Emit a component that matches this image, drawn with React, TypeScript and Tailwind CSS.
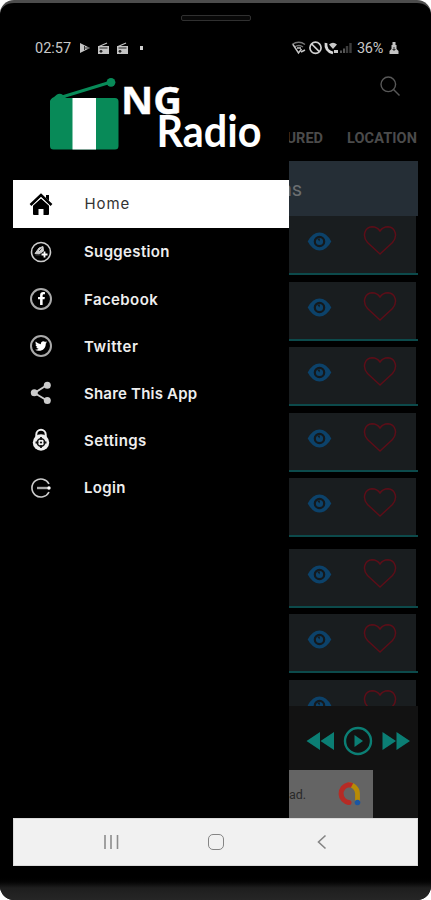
import React from 'react';
import { FaFacebookF, FaTwitter } from 'react-icons/fa';

const stations = [0, 1, 2, 3, 4, 5, 6, 7];

function RadioGlyph() {
  return (
    <svg width="13" height="13" viewBox="0 0 13 13" fill="none">
      <path d="M2 4.500 10 1" stroke="#c4c4c4" strokeWidth="1.200" />
      <path d="M1 4h11v8H1z" fill="#c4c4c4" />
      <path d="M2.500 6h8" stroke="#222" strokeWidth="1" />
      <circle cx="4" cy="9.300" r="1.400" fill="#222" />
    </svg>
  );
}

function StatusBar() {
  return (
    <div className="flex h-[24px] items-center pl-[22px] pr-[19px] text-[#c8c8c8]">
      <span className="w-[37px] pt-[2px] font-['Roboto'] text-[14.5px] leading-none">02:57</span>
      <svg className="ml-[7px]" width="12" height="12" viewBox="0 0 12 12">
        <path d="M1 1 11 6 1 11z" fill="#c4c4c4" />
        <path d="M5.500 4v4M5.500 6H10" stroke="#333" strokeWidth="1" />
      </svg>
      <div className="ml-[6px] flex gap-[6px]">
        <RadioGlyph />
        <RadioGlyph />
      </div>
      <div className="ml-[11px] h-[4px] w-[3px] bg-[#d0d0d0]" />
      <svg className="ml-auto" width="62" height="14" viewBox="0 0 62 14" fill="none">
        <path d="M1 3.500Q8 -1 14 3.500M3.500 6Q8 3 12 6" stroke="#777" strokeWidth="1.300" />
        <path d="M2 3.500 7.500 12l3-4M6 7h4M10 11l4-2" stroke="#c4c4c4" strokeWidth="1.500" />
        <circle cx="24.500" cy="6.800" r="5.600" stroke="#d0d0d0" strokeWidth="1.700" />
        <path d="m20.700 3 7.600 7.600" stroke="#d0d0d0" strokeWidth="1.700" />
        <path d="M35 2Q34 10 42 12" stroke="#d8d8d8" strokeWidth="2.800" />
        <path d="M38 3.500Q42 0 46 3.500L42 8zM43 9h4v3h-4z" fill="#c8c8c8" />
        <path d="M50 12V9.500M53 12V7.500" stroke="#555" strokeWidth="2" />
        <path d="M56 12V5M59.500 12V2" stroke="#3c3c3c" strokeWidth="2.400" />
      </svg>
      <span className="ml-[4px] w-[28px] pt-[2px] font-['Roboto'] text-[14.5px] leading-none tracking-[-0.3px]">36%</span>
      <svg className="ml-[4px]" width="10" height="13" viewBox="0 0 10 13">
        <path d="M3.500 0h3v3h1v4l2 2v3h-9V9l2-2V3h1z" fill="#c4c4c4" />
        <path d="M5 5v4M3.500 7.500h3" stroke="#333" />
      </svg>
    </div>
  );
}

function Logo() {
  return (
    <svg width="276" height="119" viewBox="13 61 276 119">
      <path d="M62 97 111 82" stroke="#088a58" strokeWidth="3" />
      <circle cx="111" cy="82.300" r="4.400" fill="#088a58" />
      <path d="M54 97 57 94.500Q60 93 63 95L66 98H115Q118.500 98 118.500 101.500V146Q118.500 149.500 115 149.500H53.500Q50 149.500 50 146V101.500Q50 99 54 97z" fill="#088a58" />
      <path d="M72.500 98h23.500v51.500h-23.500z" fill="#fff" />
      <text x="121" y="114" fontFamily="Open Sans" fontWeight="700" fontSize="37.500" textLength="61" lengthAdjust="spacingAndGlyphs" fill="#fff" stroke="#fff" strokeWidth="0.400">NG</text>
      <text x="156.500" y="147" fontFamily="Lato" fontWeight="700" fontSize="43" textLength="105" lengthAdjust="spacingAndGlyphs" fill="#fff">Radio</text>
    </svg>
  );
}

function HomeIcon() {
  return (
    <svg width="24" height="24" viewBox="0 0 24 24" fill="none">
      <path d="M1.500 13 12 3l10.500 10" stroke="#000" strokeWidth="2.600" />
      <path d="M17 3h3v6l-3-3z" fill="#000" />
      <path d="M4 13.500 12 6.500l8 7V22q0 1-1 1h-4.500v-6h-5v6H5q-1 0-1-1z" fill="#000" />
      <path d="M3 14.200 12 5.700l9 8.500" stroke="#fff" strokeWidth="0.700" />
    </svg>
  );
}

function SuggestionIcon() {
  return (
    <svg width="22" height="22" viewBox="0 0 22 22" fill="none" stroke="#ccc">
      <circle cx="11" cy="11" r="9.500" strokeWidth="1.600" />
      <path d="M5 12.500 9 7l4-1.500L13.500 10 9 13z" fill="#ccc" />
      <path d="m9 10 2.500-2.500M5.500 14h5" stroke="#444" />
      <path d="M14.500 10.500v6M11.500 13.500h6" stroke="#fff" strokeWidth="1.800" />
    </svg>
  );
}

function FacebookIcon() {
  return (
    <div className="flex h-[22px] w-[22px] items-center justify-center rounded-full border-2 border-[#aaa]">
      <FaFacebookF size={13} color="#fff" />
    </div>
  );
}

function TwitterIcon() {
  return (
    <div className="flex h-[22px] w-[22px] items-center justify-center rounded-full border-2 border-[#aaa]">
      <FaTwitter size={12} color="#fff" />
    </div>
  );
}

function ShareIcon() {
  return (
    <svg width="22" height="24" viewBox="0 0 22 24" fill="#ccc">
      <path d="M17 4 4.500 12 17 19.500" fill="none" stroke="#ccc" strokeWidth="1.900" />
      <circle cx="17.300" cy="4.300" r="3.500" />
      <circle cx="4.300" cy="11.800" r="3.500" />
      <circle cx="17.300" cy="19.500" r="3.500" />
    </svg>
  );
}

function SettingsIcon() {
  return (
    <svg width="22" height="24" viewBox="0 0 22 24" fill="none">
      <path d="M6.300 10V6.500a4.700 4.700 0 0 1 9.400 0V10" stroke="#eee" strokeWidth="2" />
      <circle cx="11" cy="14.500" r="8.200" fill="#eee" />
      <circle cx="11" cy="14.500" r="3.700" stroke="#111" strokeWidth="1.500" />
      <path d="M11 9v3M11 17v3M5.500 14.500h3M13.500 14.500h3" stroke="#111" strokeWidth="1.800" />
      <circle cx="11" cy="14.500" r="1.100" fill="#111" />
    </svg>
  );
}

function LoginIcon() {
  return (
    <svg width="22" height="22" viewBox="0 0 22 22" fill="none">
      <path d="M19 7A9 9 0 1 0 19 15" stroke="#ccc" strokeWidth="1.600" />
      <path d="M7 11h12" stroke="#aaa" strokeWidth="2.400" />
      <circle cx="19" cy="11" r="1.700" fill="#fff" />
    </svg>
  );
}

const menu = [
  { label: 'Suggestion', icon: SuggestionIcon, spacing: 'tracking-[0.35px]' },
  { label: 'Facebook', icon: FacebookIcon, spacing: 'tracking-[0.4px]' },
  { label: 'Twitter', icon: TwitterIcon, spacing: 'tracking-[0.6px]' },
  { label: 'Share This App', icon: ShareIcon, spacing: 'tracking-[0.2px]' },
  { label: 'Settings', icon: SettingsIcon, spacing: 'tracking-[0.4px]' },
  { label: 'Login', icon: LoginIcon, spacing: 'tracking-[0.35px]' },
];

function Drawer() {
  return (
    <div className="w-[276px] shrink-0 bg-black">
      <Logo />
      <div className="flex h-[48px] items-center bg-white pl-[16px]">
        <div className="flex w-[24px] justify-center"><HomeIcon /></div>
        <span className="ml-[31.5px] pt-[1px] font-['Inter'] text-[15px] tracking-[0.9px] text-[#333]">Home</span>
      </div>
      {menu.map(({ label, icon: Icon, spacing }) => (
        <div key={label} className="flex h-[47.2px] items-center pl-[16px]">
          <div className="flex w-[24px] justify-center"><Icon /></div>
          <span className={`ml-[31px] whitespace-nowrap pt-[2px] font-['Inter'] text-[15px] font-semibold text-[#eee] ${spacing}`}>
            {label}
          </span>
        </div>
      ))}
    </div>
  );
}

function StationRow({ last }: { last: boolean }) {
  return (
    <div className={last ? 'mb-[11.5px]' : 'mb-[6.5px]'}>
      <div className="flex h-[57px] w-[127px] bg-[#191d1f]">
        <svg className="ml-[18px] mt-[16px] shrink-0" width="25" height="19" viewBox="0 0 25 19">
          <path d="M.7 9.500Q5.500.5 12.500.5t11.800 9q-4.800 9-11.800 9T.7 9.500z" fill="#0c426a" />
          <circle cx="12.500" cy="9.500" r="4.700" fill="#0c426a" stroke="#14191c" strokeWidth="2.200" />
          <path d="M12.500 9.500 10 6.500h3z" fill="#14191c" />
        </svg>
        <svg className="ml-[30.5px] mt-[9px] shrink-0" width="34" height="31" viewBox="0 0 34 31" fill="none">
          <path d="M17 29 4.500 17.500C-1 11.500 1.500 2 9 1.700c4 0 6.500 2 8 4.300 1.500-2.300 4-4.300 8-4.300C32.500 2 35 11.500 29.500 17.500z" stroke="#5c0e18" strokeWidth="1.500" />
        </svg>
      </div>
      <div className="h-[2px] bg-[#0c4a4b]" />
    </div>
  );
}

function Player() {
  return (
    <div className="flex h-[64px] shrink-0 items-center bg-[#121212] pl-[17px] pt-[5px]">
      <svg width="104" height="30" viewBox="0 0 104 30" fill="#0b7e74">
        <path d="M.5 15 14 6v18zM14.500 15 28 6v18zM76.500 6 90 15l-13.500 9zM90.500 6 104 15l-13.500 9z" />
        <circle cx="52" cy="15" r="13" fill="none" stroke="#0b7e74" strokeWidth="2.400" />
        <path d="m48.500 9 8.500 6-8.500 6z" />
      </svg>
    </div>
  );
}

function AdBanner() {
  return (
    <div className="flex h-[48px] shrink-0 bg-[#141414]">
      <div className="flex w-[84px] items-center bg-[#646464]">
        <span className="w-[18px] pt-[2px] font-['Roboto'] text-[12.5px] text-[#292929]">ad.</span>
        <svg className="ml-[29px]" width="25" height="26" viewBox="0 0 25 26" fill="none">
          <path d="M21.500 21V12.500A9 9 0 0 0 12.500 3.700" stroke="#b88b05" strokeWidth="4.800" />
          <path d="M13 21.500A9 9 0 0 1 12.500 3.700Q14.500 3.700 16 4.500" stroke="#b62b25" strokeWidth="5" />
          <circle cx="13" cy="21.500" r="2.500" fill="#b62b25" />
          <circle cx="21.500" cy="21.500" r="2.800" fill="#1b56a2" />
        </svg>
      </div>
    </div>
  );
}

function Stations() {
  return (
    <div className="flex w-[129px] flex-col overflow-hidden bg-black">
      <div className="flex h-[50px] shrink-0 justify-end pr-[18px] pt-[15px]">
        <svg width="20" height="20" viewBox="0 0 20 20" fill="none" stroke="#585858" strokeWidth="1.400">
          <circle cx="8.300" cy="8.300" r="7.300" />
          <path d="m13.500 13.500 6 6" />
        </svg>
      </div>
      <div className="flex h-[50px] shrink-0 justify-end gap-[24px] pr-[1px] pt-[17px] font-['Roboto'] text-[14.5px] font-bold leading-[21px] text-[#4b4b4b]">
        <span>FEATURED</span>
        <span className="tracking-[0.1px]">LOCATION</span>
      </div>
      <div className="flex h-[55px] shrink-0 items-center justify-end bg-[#252e36] pr-[116px] font-['Roboto'] text-[20px] text-[#6b6e71]">
        <span>Stations</span>
      </div>
      <div className="min-h-0 flex-1 overflow-hidden">
        {stations.map((id) => (
          <StationRow key={id} last={id === 4} />
        ))}
      </div>
      <Player />
      <AdBanner />
    </div>
  );
}

function NavBar() {
  return (
    <div className="flex h-[48px] items-center border border-[#dcdcdc] bg-[#f1f1f1] pl-[90px]">
      <svg width="15" height="16" viewBox="0 0 15 16" stroke="#8c8c8c" strokeWidth="1.600">
        <path d="M1 1v14M7 1v14M13.500 1v14" />
      </svg>
      <div className="ml-[89px] h-[16px] w-[16px] rounded-[5px] border-[1.5px] border-[#858585]" />
      <svg className="ml-[93px]" width="10" height="16" viewBox="0 0 10 16" fill="none" stroke="#858585" strokeWidth="1.600">
        <path d="M8.500 1.500 1.500 8l7 6.500" />
      </svg>
    </div>
  );
}

function App() {
  return (
    <div className="h-[900px] w-[431px] bg-white">
      <div className="flex h-full flex-col overflow-hidden rounded-[14px] border-t-[3px] border-[#4c4c4c] bg-black">
        <div className="flex h-[33px] shrink-0 justify-center pt-[12px]">
          <div className="h-[6px] w-[70px] rounded-[2px] border border-[#303030] bg-[#080808]" />
        </div>
        <div className="mx-[13px] shrink-0">
          <StatusBar />
          <div className="mt-[1px] flex h-[757px]">
            <Drawer />
            <Stations />
          </div>
          <NavBar />
        </div>
        <div className="mt-[10px] flex-1 bg-linear-to-b from-black via-[#1e1e1e] to-[#262626]" />
      </div>
    </div>
  );
}

export default App;
